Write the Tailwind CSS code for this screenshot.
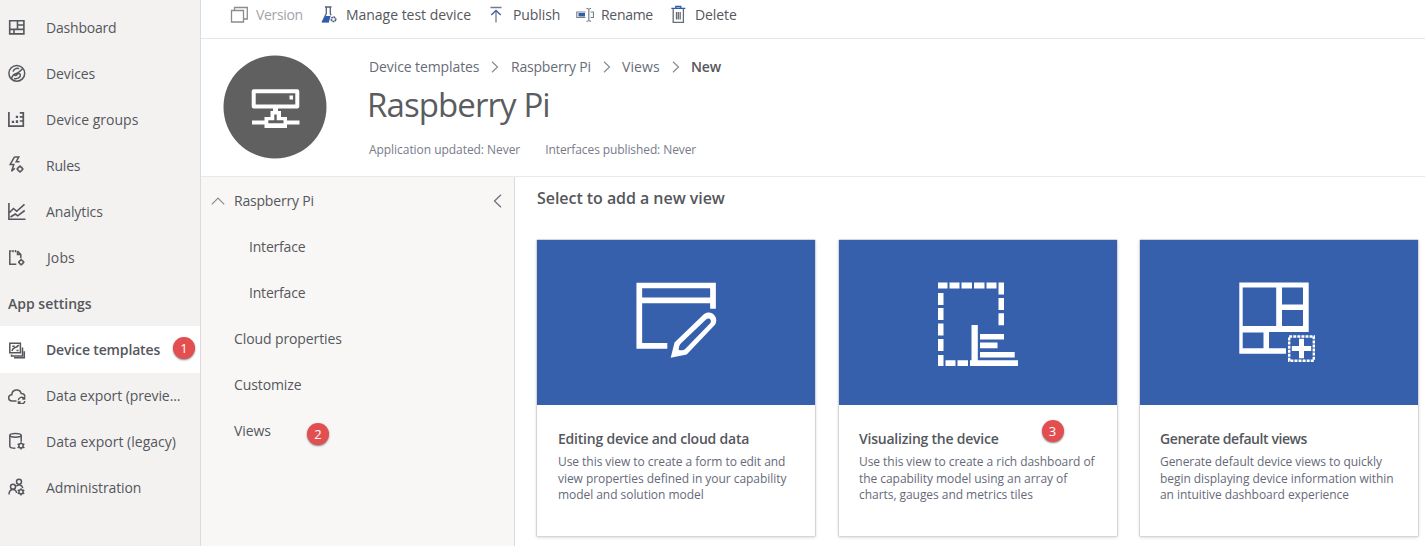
<!DOCTYPE html>
<html lang="en">
<head>
<meta charset="utf-8">
<title>Device templates</title>
<script src="https://cdn.jsdelivr.net/npm/@tailwindcss/browser@4"></script>
</head>
<body class="flex h-[546px] w-[1425px] overflow-hidden bg-white font-['Open_Sans','Noto_Sans',sans-serif] text-[14px] leading-[20px] tracking-[-0.1px] text-[#55575c]">

<nav class="relative flex w-[201px] shrink-0 flex-col border-r border-[#d9dbe0] bg-[#f3f2f1] pt-1">
  <a class="flex h-[46px] items-center gap-5 pl-2"><svg class="size-[18px] shrink-0" viewBox="8 18 18 18" fill="none" stroke="#55575c" stroke-width="1.6"><path d="M9.700 20.700h14.200v13.200H9.700zM17.500 20.700v8.600M9.700 29.400h14.200M17.500 25h6.400M14 29.400v4.500"/></svg><span class="pt-px tracking-[-0.2px]">Dashboard</span></a>
  <a class="flex h-[46px] items-center gap-5 pl-2"><svg class="size-[18px] shrink-0" viewBox="8 64 18 18" fill="none" stroke="#55575c" stroke-width="1.5"><circle cx="16.800" cy="73.300" r="7.900"/><path d="M11.600 78.600c.6-3.600 2.200-4.600 4.600-5.200 2.800-.6 3.600-1.900 6.300-4.600M14 78.400c3.400.9 6.800-.9 6.300-3.600-.3-1.600-2.600-1.600-3.400-.2-.7 1.200-2 1.200-2.800.2M13 71.600c.7-2.500 3.300-3.800 6.200-3"/></svg><span class="pt-px">Devices</span></a>
  <a class="flex h-[46px] items-center gap-5 pl-2"><svg class="size-[18px] shrink-0" viewBox="8 110 18 18" fill="none" stroke="#55575c" stroke-width="1.700"><path d="M8.900 112v14.200H23.300V112.800H19.800M19.800 116.800h3.500M19.800 121h3.500"/><path d="M11.800 120.800h2.300v2.300h-2.300zM15.800 115.800h2.300v2.300h-2.300zM15.800 120.300h2.300v2.800h-2.300z" fill="#55575c" stroke="none"/></svg><span class="pt-px tracking-normal">Device groups</span></a>
  <a class="flex h-[46px] items-center gap-5 pl-2"><svg class="size-[18px] shrink-0" viewBox="8 156 18 18" fill="none" stroke="#55575c" stroke-width="1.500"><path d="M14.500 156.900h4.300l-2.600 4.800h3.400M14.500 156.900l-4.300 7.600h3.600l-2.200 6.800 3.200-3"/><circle cx="20" cy="169" r="2.300"/><path d="M20 165.300v1.400M20 171.300v1.400M16.400 169h1.300M22.300 169h1.300"/></svg><span class="pt-px tracking-[-0.2px]">Rules</span></a>
  <a class="flex h-[46px] items-center gap-5 pl-2"><svg class="size-[18px] shrink-0" viewBox="8 202 18 18" fill="none" stroke="#55575c" stroke-width="1.600"><path d="M8.900 203v16.200H25.500M9.500 212.500l4-4 3.200 2.800 7.800-7M10.500 217l4.800-3 2.400 1.800 7-5.300"/></svg><span class="pt-px">Analytics</span></a>
  <a class="flex h-[46px] items-center gap-5 pl-2"><svg class="size-[18px] shrink-0" viewBox="8 248 18 18" fill="none" stroke="#55575c" stroke-width="1.500"><path d="M11.500 251H9.800v13.300h6.500M17.500 251l3.300 3.600v3.600M17.500 251v3.600h3.300M13 250v2.300M15.500 250v2.300"/><circle cx="21.200" cy="262.200" r="2"/><path d="M21.200 258.800v1.400M21.200 264.200v1.300M18 262.200h1.200M23.200 262.200h1.300"/></svg><span class="pl-px pt-px tracking-[0.1px]">Jobs</span></a>
  <div class="flex h-[46px] items-center pl-2 pt-px font-semibold"><span class="tracking-normal">App settings</span></div>
  <a class="flex h-[47px] items-center gap-5 bg-white pl-2 font-semibold"><svg class="size-[18px] shrink-0" viewBox="8 340 18 18" fill="none" stroke="#55575c" stroke-width="1.500"><path d="M9.800 342.300h10.600v9.500H9.800zM11.500 353.500v1.500h11v-8.500M14 356.700h10.300v-6.500"/><path d="M12 350c.6-3 2-3 3.200-3.400s2.500-1 3.500-2.600M12.300 345.200h2.400M16.500 349.600h2"/></svg><span class="tracking-[-0.15px]">Device templates</span></a>
  <a class="-mt-px flex h-[46px] items-center gap-5 pl-2"><svg class="size-[18px] shrink-0" viewBox="8 386 18 18" fill="none" stroke="#55575c" stroke-width="1.500"><path d="M16.500 401h-4.300c-4.600 0-4.600-6.200-.4-6.300.2-5.800 8.200-6.400 9.400-1.200 2 0 3.600 1 3.600 3.200"/><path d="M18.300 400.300a3.300 3.300 0 0 1 6-1.600M24.600 396.800v2.300h-2.300M24.800 401a3.300 3.300 0 0 1-6 1.500M18.400 404v-2h2.300"/></svg><span class="pt-px">Data export (previe...</span></a>
  <a class="flex h-[46px] items-center gap-5 pl-2"><svg class="size-[18px] shrink-0" viewBox="8 432 18 18" fill="none" stroke="#55575c" stroke-width="1.500"><ellipse cx="15.500" cy="435.300" rx="5.700" ry="1.900"/><path d="M9.800 435.300v11c0 1.200 2.200 2 5.600 2M21.200 435.300v6.500"/><circle cx="21" cy="445.800" r="2.200"/><path d="M21 442.200v1.400M21 448v1.500M17.600 443.800l1.300.8M23.100 447l1.300.8M17.600 447.800l1.300-.8M23.100 444.600l1.300-.8"/></svg><span class="pt-px tracking-[0.02px]">Data export (legacy)</span></a>
  <a class="flex h-[46px] items-center gap-5 pl-2"><svg class="size-[18px] shrink-0" viewBox="8 478 18 18" fill="none" stroke="#55575c" stroke-width="1.500"><circle cx="19" cy="481.800" r="2.500"/><circle cx="13" cy="486.800" r="2.500"/><path d="M9 494.500c0-6.500 7.300-6.500 7.600-1.500M16.300 486.300c1.500-1.800 5.500-2 6.500 1.700"/><circle cx="21" cy="491.800" r="2.100"/><path d="M21 488.300v1.400M21 494v1.400M17.700 490l1.300.7M23 493l1.300.7M17.700 493.700l1.300-.7M23 490.700l1.300-.7"/></svg><span class="pt-px">Administration</span></a>
  <span class="absolute left-[173px] top-[337px] flex size-[22px] items-center justify-center rounded-full bg-[#e34f50] text-[13px] text-white shadow-[0_1px_2px_rgba(0,0,0,0.5)]">1</span>
</nav>

<div class="flex min-w-0 grow flex-col">
  <div class="flex h-[39px] shrink-0 items-center border-b border-[#e6e6e6] pb-[9px] pl-[29px]">
    <div class="flex w-[91px] items-center gap-[8px] text-[#a3a4a8]"><svg class="h-[20px] w-[18px]" viewBox="230 5 18 20" fill="none" stroke="#8b8c91" stroke-width="1.300"><path d="M231.500 10.500h12v11.500h-12zM234.500 10.500V7.500h12.800V19h-3.600"/></svg><span class="tracking-[-0.35px]">Version</span></div>
    <div class="flex w-[168px] items-center gap-[9px]"><svg class="h-[20px] w-[16px]" viewBox="321 5 16 20" fill="none" stroke="#55607a" stroke-width="1.300"><path d="M325 7h6.500M326.300 7v6.500l-3.800 8h6.500M330.300 7v6.500l.8 1.700"/><path d="M325.600 16h5l-1.800 6.500h-7z" fill="#2f5bb0" stroke="none"/><circle cx="333.500" cy="19.300" r="2.200" stroke-dasharray="1.800 .5" stroke-width="1.700"/></svg><span class="tracking-[-0.03px]">Manage test device</span></div>
    <div class="flex w-[87px] items-center gap-[9px]"><svg class="h-[20px] w-[15px]" viewBox="489 5 15 20" fill="none" stroke="#777b84" stroke-width="1.300"><path d="M490.500 7.500h11M496 11v11.500"/><path d="M491.300 15l4.700-4.500 4.700 4.500" stroke="#3e5f9f"/></svg><span>Publish</span></div>
    <div class="flex w-[95px] items-center gap-[7px]"><svg class="h-[20px] w-[18px]" viewBox="576 5 18 20" fill="none" stroke="#7c8088" stroke-width="1.200"><path d="M585.500 12h-8.700v5.500h8.700M588.800 8.500V21M586.500 8.200l2.300 1 2.300-1M586.500 21.500l2.300-1 2.300 1M590.500 12h3v5.500h-3"/><path d="M578.500 13h6.500v3.500h-6.500z" fill="#2f5bb0" stroke="none"/></svg><span class="tracking-[-0.3px]">Rename</span></div>
    <div class="flex items-center gap-[9px]"><svg class="h-[20px] w-[15px]" viewBox="671 5 15 20" fill="none" stroke="#666b75" stroke-width="1.300"><path d="M673.200 9v13.300h10.200V9M676.500 12v7.500M678.300 12v7.500M680.200 12v7.500"/><path d="M671.300 8.300h14M675.800 8V6.500h5V8" stroke="#2f5bb0"/></svg><span>Delete</span></div>
  </div>

  <header class="flex h-[138px] shrink-0 items-start border-b border-[#e9e9e9] pl-[22px] pt-[16px]">
    <svg class="size-[104px] shrink-0" viewBox="223 55 104 104"><circle cx="275" cy="107" r="51.500" fill="#606060"/><path d="M253.700 91.200h43.600v15.200h-43.600z" fill="none" stroke="#fff" stroke-width="4" stroke-linejoin="round"/><path d="M289.500 95.500h3.500v4h-3.500zM273 108h5v3h3v6h6v3.500h12.500v4H287v3.500h-22.500v-3.500H252v-4h12.500V117h6v-6h2.500z" fill="#fff"/><path d="M274.300 114.500h2.400v5.800h6.800v3h-15.200v-3h6z" fill="#606060"/></svg>
    <div class="flex flex-col pl-[42px] pt-[2px]">
      <div class="flex h-[20px] items-center text-[#686c78]">
        <span class="w-[142px]">Device templates<svg class="ml-[12px] inline h-[12px] w-[8px] align-[-1px]" viewBox="0 0 8 12" fill="none" stroke="#8a8c94" stroke-width="1.200"><path d="M1 .8l5.500 5.200L1 11.200"/></svg></span>
        <span class="w-[111px] tracking-[-0.2px]">Raspberry Pi<svg class="ml-[12px] inline h-[12px] w-[8px] align-[-1px]" viewBox="0 0 8 12" fill="none" stroke="#8a8c94" stroke-width="1.200"><path d="M1 .8l5.500 5.200L1 11.200"/></svg></span>
        <span class="w-[69px] tracking-[0.1px]">Views<svg class="ml-[12px] inline h-[12px] w-[8px] align-[-1px]" viewBox="0 0 8 12" fill="none" stroke="#8a8c94" stroke-width="1.200"><path d="M1 .8l5.500 5.200L1 11.200"/></svg></span>
        <span class="font-semibold text-[#55575c]">New</span>
      </div>
      <h1 class="-ml-[2px] mt-[6px] text-[33px] leading-[44px] tracking-[-0.9px] text-[#5b5c5f]">Raspberry Pi</h1>
      <div class="mt-[14px] flex gap-[25px] text-[12px] leading-[18px] tracking-[-0.05px] text-[#777b88]"><span>Application updated: Never</span><span class="tracking-[-0.1px]">Interfaces published: Never</span></div>
    </div>
  </header>

  <div class="flex min-h-0 grow">
    <aside class="relative flex w-[314px] shrink-0 flex-col border-r border-[#d9dbe0] bg-[#f8f7f6] pt-px">
      <div class="flex h-[46px] items-center pl-[10px]"><svg class="h-[8px] w-[14px]" viewBox="0 0 14 8" fill="none" stroke="#8a8c94" stroke-width="1.200"><path d="M.8 7.300L7 1l6.200 6.300"/></svg><span class="ml-[9px] tracking-[-0.2px]">Raspberry Pi</span><svg class="ml-auto mr-[12px] h-[14px] w-[9px]" viewBox="0 0 9 14" fill="none" stroke="#6f727b" stroke-width="1.300"><path d="M8 .8L1.500 7 8 13.200"/></svg></div>
      <div class="flex h-[46px] items-center pl-12 tracking-[-0.2px]">Interface</div>
      <div class="flex h-[46px] items-center pl-12 tracking-[-0.2px]">Interface</div>
      <div class="flex h-[46px] items-center pl-[33px]">Cloud properties</div>
      <div class="flex h-[46px] items-center pl-[33px]">Customize</div>
      <div class="flex h-[46px] items-center pl-[33px]">Views</div>
      <span class="absolute left-[106px] top-[246px] flex size-[22px] items-center justify-center rounded-full bg-[#e34f50] text-[13px] text-white shadow-[0_1px_2px_rgba(0,0,0,0.5)]">2</span>
    </aside>

    <main class="flex grow flex-col pl-[21px] pt-[10px]">
      <h2 class="h-[22px] pl-px text-[16px] font-semibold leading-[22px] tracking-[-0.05px]">Select to add a new view</h2>
      <div class="mt-[30px] flex gap-[21.500px]">
        <article class="flex h-[298px] w-[280px] flex-col rounded-[2px] border border-[#d5d5d8] bg-white shadow-[0_1px_3px_rgba(0,0,0,0.12)]">
          <div class="h-[165px] bg-[#3660ac]"><svg class="h-[164px] w-[278px]" viewBox="537 240 278 164" fill="none" stroke="#fff"><path d="M713 308.700V285.500H639.300V345.800H667.300M639.300 300.400H713" stroke-width="5.700"/><path d="M670.700 357.800l3.800-15.300 29.300-28.300c7-5.500 16 3 11.200 10.600l-28.300 29.700zM678.800 350c-.2-3 .5-5 2.500-7l25-23.800c3.200-2.200 6 1.300 3.900 4l-24.800 25.500c-1.800 1.600-3.600 2-6.600 1.300z" fill="#fff" fill-rule="evenodd" stroke="none"/></svg></div>
          <div class="px-[21px] pt-[23px]"><h3 class="font-semibold leading-[22px] tracking-[-0.220px]">Editing device and cloud data</h3><p class="mt-[4px] whitespace-nowrap text-[12px] leading-[16.700px] tracking-[-0.05px] text-[#666a78]">Use this view to create a form to edit and<br>view properties defined in your capability<br>model and solution model</p></div>
        </article>
        <article class="relative flex h-[298px] w-[280px] flex-col rounded-[2px] border border-[#d5d5d8] bg-white shadow-[0_1px_3px_rgba(0,0,0,0.12)]">
          <div class="h-[165px] bg-[#3660ac]"><svg class="h-[164px] w-[278px]" viewBox="838.500 240 278 164" fill="#fff"><path d="M937.500 282.500h9.500v6h-9.500zM949 282.500h10v6h-10zM961 282.500h10.500v6H961zM973.500 282.500H984v6h-10.500zM986 282.500h10v6h-10zM998 282.500h5.500v12H998zM998 298h5.500v12H998zM998 313.300h5.500v12H998zM937.500 293h5.500v12h-5.500zM937.500 308h5.500v12h-5.500zM937.500 323.500h5.500v12h-5.500zM937.500 339h5.500v12h-5.500zM937.500 355h5.500v11h-5.500zM945 360.300h10v5.700h-10zM957 360.300h10.500v5.700H957zM969.500 360.300h1.500V325h6.300v35.300h40.200v5.700h-48zM979.500 334h24v5.500h-24zM979.500 342.500H997v5.800h-17.500zM979.500 352h34.700v5.500h-34.700z"/></svg></div>
          <div class="px-[20.500px] pt-[23px]"><h3 class="font-semibold leading-[22px] tracking-[-0.220px]">Visualizing the device</h3><p class="mt-[4px] whitespace-nowrap text-[12px] leading-[16.700px] tracking-[-0.05px] text-[#666a78]">Use this view to create a rich dashboard of<br>the capability model using an array of<br>charts, gauges and metrics tiles</p></div>
          <span class="absolute left-[203px] top-[180px] flex size-[22px] items-center justify-center rounded-full bg-[#e34f50] text-[13px] text-white shadow-[0_1px_2px_rgba(0,0,0,0.5)]">3</span>
        </article>
        <article class="flex h-[298px] w-[280px] flex-col rounded-[2px] border border-[#d5d5d8] bg-white shadow-[0_1px_3px_rgba(0,0,0,0.12)]">
          <div class="h-[165px] bg-[#3660ac]"><svg class="h-[164px] w-[278px]" viewBox="1140 240 278 164" fill="none" stroke="#fff"><path d="M1239.300 282.500h69.400V332H1269v16.200h17v5.600h-46.700zM1242.700 287.500V326h33.500v-38.500zM1282 287.500v17h21v-17zM1282 310v16h21v-16zM1242.700 332.500v15.700h20.800v-15.700z" fill="#fff" fill-rule="evenodd" stroke="none"/><path d="M1289.200 336.500h24.600v24.200h-24.600z" stroke-width="2.400" stroke-dasharray="3 1.070"/><path d="M1291.800 348.500h19.400M1301.500 338.800v19.400" stroke-width="5"/></svg></div>
          <div class="px-5 pt-[23px]"><h3 class="font-semibold leading-[22px] tracking-[-0.420px]">Generate default views</h3><p class="mt-[4px] whitespace-nowrap text-[12px] leading-[16.700px] tracking-[-0.05px] text-[#666a78]">Generate default device views to quickly<br>begin displaying device information within<br>an intuitive dashboard experience</p></div>
        </article>
      </div>
    </main>
  </div>
</div>
</body>
</html>
